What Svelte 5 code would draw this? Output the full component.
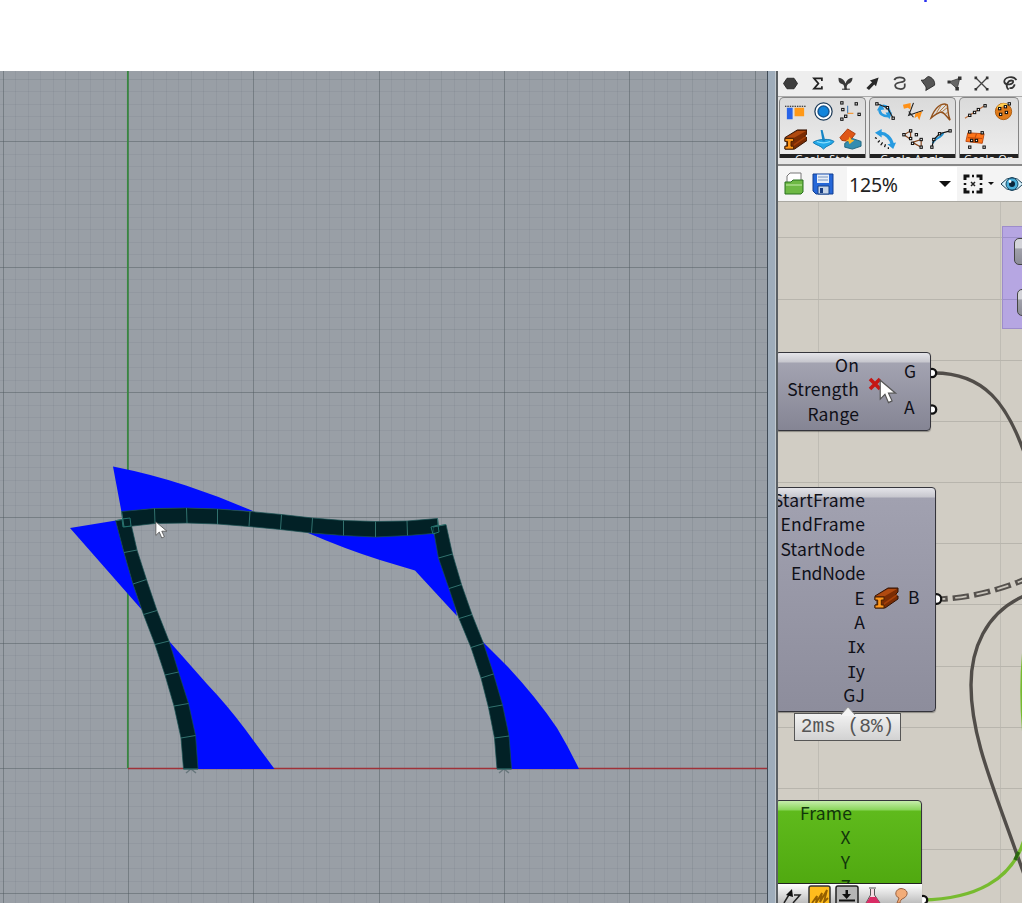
<script>
  // Viewport grid
  const step = 12.535;
  const vLines = Array.from({ length: 63 }, (_, i) => ({ p: 128 + (i - 10) * step, major: i % 10 === 0, mid: i % 5 === 0 })).filter((l) => l.p > 0 && l.p < 767);
  const hLines = Array.from({ length: 78 }, (_, i) => ({ p: 697.1 + (20 - i) * step, major: i % 10 === 0, mid: i % 5 === 0 })).filter((l) => l.p > 0 && l.p < 832);

  // Deformed members: pairs of opposite section points
  const members = [
    [[115.7, 520.7, 129.7, 518], [124, 552.5, 137, 550], [133, 584, 146.5, 579.5], [143.5, 614.5, 157, 610.5], [155, 644.5, 169, 641], [165, 675, 178.5, 672], [174, 706, 188.5, 703.5], [181, 738, 195.5, 735.5], [183.5, 769, 198, 769]],
    [[121.5, 511.5, 124, 527], [154.5, 508.5, 155, 523.5], [186.5, 508, 187, 523], [217.5, 509, 217.5, 524], [250, 511.5, 249, 526.5], [281.5, 514.5, 280.5, 529.5], [312.5, 518, 311.5, 533], [343.5, 520.5, 343.5, 535.5], [375.5, 521.5, 375.5, 537], [407, 521, 407.5, 535.5], [437.5, 518.5, 439, 533]],
    [[433, 527, 446, 524.5], [438.5, 558, 452.5, 554], [449, 588.5, 461.5, 584.5], [459, 618.5, 472, 614.5], [471, 647.5, 483.5, 643.5], [481, 678, 493.5, 674], [488.5, 707.5, 502.5, 705], [494.5, 738, 509, 736], [497, 769, 511.5, 769]],
  ].map((m) => ({
    outline: [...m.map((s) => [s[0], s[1]]), ...m.map((s) => [s[2], s[3]]).reverse()].join(' '),
    cuts: m,
  }));
  const moments = [
    'M113 466.5Q151 474 186 485.5T254 511.5L217 509L186 508L154 508.5L121.5 512Z',
    'M70 528L116 520.5L124 552L133 583L142 610Z',
    'M169 641L207 684Q227 705 245 729L274.5 769H196L193 735L174 672Z',
    'M307 532.5L343 535L375 536.5L407 535L434 533L441 558L452 588L457 616L415 570.5L380 560Q345 549 307 532.5Z',
    'M482 641L507 666Q536 697 557 728Q569 748 579 769H508L506 735L492 674Z',
  ];

  const boxes = (...pts) => pts.map(([x, y]) => `<rect x="${x - 1.2}" y="${y - 1.2}" width="2.4" height="2.4" fill="#fff" stroke="#111" stroke-width="1.1"/>`).join('');
  const line = (d, c, w = 1.2) => `<path d="${d}" fill="none" stroke="${c}" stroke-width="${w}"/>`;
  const fill = (d, c, s = 'none') => `<path d="${d}" fill="${c}" stroke="${s}"/>`;
  const svg = (body, w = 24, h = 24) => `<svg width="${w}" height="${h}" viewBox="0 0 ${w} ${h}">${body}</svg>`;

  const beam = fill('M1 10L14 2H24V6L22 8V10H24V13L11 22H1V19H3V14H1Z', '#7a2c04', '#331302') + fill('M2 10L14 3L23 3L11 10Z', '#b04a10') + fill('M10 17L23 8V10L10 19Z', '#a5400a') + fill('M1 11H10V14H7.3V19H10V22H1V19H3.7V14H1Z', '#ff981b', '#482004');

  const categories = [
    fill('M8 6H16L20 12L16 18H8L4 12Z', '#3d3d3d', '#222'),
    line('M17 9V6.2H8L13 12L8 17.8H17V15', '#222', 2),
    fill('M10.5 19C11 15 10 13 8 12.500C4 12 4 8 4 5.500C8 6 11 8 12 12C13 8 16 6 20 5.500C20 9 18 12 15 12.500C13 14 13 17 14 19Z', '#3a3a3a') + line('M8 18.5H17', '#333'),
    fill('M5 17L11.500 10.500L9 8.500L19 5L16 15L14 13L8 19.500Z', '#292929'),
    line('M6 8C8 4 17 4 18 8C18 12 8 9 7 14C7 19 18 20 18 15V12', '#444', 2),
    fill('M5 8C9 9 10 5 13 4C18 5 21 10 20 14L10 20C12 15 7 13 5 8Z', '#555', '#222'),
    fill('M6 10L18 6L15 18Z', '#666', '#444') + fill('M4 8.500H7.500V12H4ZM16 4H20V8H16ZM13 16H17V20H13Z', '#333'),
    line('M6 6L18 18M18 6L6 18', '#444', 1.5) + fill('M4 4H7V7H4ZM17 4H20V7H17ZM4 17H7V20H4ZM17 17H20V20H17Z', '#333'),
    line('M20 8C16 2 6 5 6 10C7 15 18 13 16 9C11 7 6 14 11 19M12 17C15 18 17 16 18 13', '#333', 2),
  ];

  const ribbon = [
    {
      title: 'Geolo Stat',
      icons: [
        fill('M3 8H9V20H3Z', '#2864e8') + fill('M11 8H21V17H11Z', '#ff9918') + '<path d="M1 6.500H23" stroke="#111" stroke-width="1.2" stroke-dasharray="1.500 1"/>',
        '<circle cx="12" cy="12" r="9" fill="#fff" stroke="#1d3b58" stroke-width="1.3"/><circle cx="12" cy="12" r="5.700" fill="#1285dc" stroke="#185893" stroke-width="1.500"/>',
        line('M9 6V14', '#4b82b9') + line('M9 14H15', '#f39b3d') + boxes([3, 3], [18, 4], [4, 10], [21, 15], [3, 20], [7, 17]),
        beam,
        fill('M1 15C7 11 19 11 23 14C21 18 15 18 12 22C9 18 4 18 1 15Z', '#24a9e9', '#1479b2') + fill('M9 2H11L14 14H11Z', '#1685c5') + line('M5 14Q12 17 19 14', '#8be0ff'),
        fill('M1 10L9 1L17 6L11 14L3 13Z', '#df5717', '#a93b0c') + fill('M6 16L14 11L23 14V19L14 22L6 20Z', '#348db0', '#236980') + fill('M11 9L13 12L16 13L13 15L11 17L10 14L7 13L10 12Z', '#ffb82d'),
      ],
    },
    {
      title: 'Geolo Anglo',
      icons: [
        line('M6 9C5 14 9 17 15 17M9 6C14 6 17 10 16 15', '#279be1', 2.6) + fill('M3 11L7 4L11 10ZM12 13H19L16 20Z', '#279be1') + line('M3 4L14 8L20 19', '#222') + boxes([3, 4], [14, 8], [20, 19]),
        line('M12 3L7 16L22 11M7 12L12 18', '#222') + fill('M1 5L9 3V10L6 8L2 9ZM14 14L21 12L18 21L16 17L13 19Z', '#ff9118'),
        line('M2 19C6 8 13 2 19 5C20 8 19 14 22 21C18 17 15 11 11 13C7 14 5 17 2 19Z', '#92501b', 1.5) + line('M8 13L13 5M11 12L18 5M14 12L19 8M17 15L20 12', '#b47535', 1),
        line('M5 6C12 4 18 11 19 17', '#279be1', 3.5) + fill('M1 5L8 1V10ZM14 17L23 15L20 22Z', '#279be1') + line('M1 10L3 11M4 15L6 13M7 18L9 15M11 20L12 17M15 22V20', '#111', 1.3),
        line('M2 7L9 3V12L2 7M11 15L20 12V20L11 15', '#87451b') + boxes([2, 7], [9, 3], [9, 11], [11, 16], [20, 12], [20, 20], [15, 7]),
        line('M4 16C5 10 12 12 15 5', '#2494d3', 2) + line('M3 20L5 12L11 6L22 3', '#111') + boxes([3, 20], [5, 12], [11, 6], [22, 3]),
      ],
    },
    {
      title: 'Geolo Op',
      icons: [
        line('M1 19L23 5', '#bd7141') + boxes([6, 16], [11, 13], [15, 10], [22, 6]),
        '<circle cx="12" cy="12" r="8.500" fill="#e07b1b" stroke="#ad5d10"/><path d="M6 9Q10 3 16 6" stroke="#ffcf52" stroke-width="3" fill="none"/>' + boxes([8, 9], [14, 7], [18, 4], [9, 15], [15, 13]),
        fill('M4 5L21 6L19 16L2 14Z', '#ff7519', '#bd4910') + line('M4 10L19 11M10 15L13 6', '#c64d0c') + boxes([6, 4], [19, 5], [8, 13], [13, 13], [6, 20], [21, 20]),
      ],
    },
  ];

  const openIcon = svg(fill('M5 9V4L8 1H19V11H5Z', '#fff', '#777') + fill('M3 10H9L11 8H21V20L19 22H3Z', '#6eb944', '#28711e') + line('M4 13H20', '#b8e59c'));
  const saveIcon = svg(fill('M2 2H22V22H5L2 19Z', '#2567d8', '#123f91') + fill('M6 2.500H18V11H6Z', '#e7eef8') + line('M7 5H17M7 8H17', '#7894bd', 1) + fill('M7 14H18V22H7Z', '#c6d4e6', '#17428a') + fill('M9 16H12V21H9Z', '#193e82'));
  const fitIcon = svg(line('M4 8V4H8.500M15.500 4H20V8M20 16V20H15.500M8.500 20H4V16', '#111', 3) + line('M10 10L14 14M14 10L10 14', '#222', 1.5) + line('M11 4H13M11 20H13M4 11V13M20 11V13', '#111', 2.5));
  const eyeIcon = svg(fill('M1 12Q12 -1 23 12Q12 25 1 12Z', '#d7f2fc', '#163a50') + '<circle cx="12" cy="12" r="6" fill="#4bafd9" stroke="#164b6a"/><circle cx="12" cy="12" r="3" fill="#09253b"/><circle cx="10" cy="9.500" r="1.400" fill="#fff"/>');
  const beamIcon = svg(beam, 26, 24);
  const pointer = fill('M1 1V17L5 13L8 20L11 18.5L8 12H14Z', '#fff', '#555');

  const wiresV = [40.5, 222.5];
  const wiresH = [35, 97, 158, 219, 280, 341, 402, 464, 525, 586, 647];
</script>

<main>
  <header><i></i></header>
  <div class="work">
    <svg class="viewport" width="767" height="832" viewBox="0 0 767 832">
      <rect width="767" height="832" fill="#999fa6" />
      {#each vLines as l}<rect x={Math.round(l.p)} y="0" width="1" height="832" fill="#4f5a61" opacity={l.major ? 0.48 : l.mid ? 0.14 : 0.09} />{/each}
      {#each hLines as l}<rect x="0" y={Math.round(l.p)} width="767" height="1" fill="#4f5a61" opacity={l.major ? 0.48 : l.mid ? 0.14 : 0.09} />{/each}
      <g transform="translate(0 -71)">
        <path d="M127.8 71V768" stroke="#37883f" stroke-width="1.7" />
        <path d="M128 768.5H767" stroke="#9f3138" stroke-width="1.4" />
        <path d="M186 773L191 769L196 773M499 773L504 769L509 773" fill="none" stroke="#68777c" stroke-width="1.5" />
        {#each moments as m}<path d={m} fill="#000cff" />{/each}
        {#each members as m}
          <polygon points={m.outline} fill="#022126" stroke="#174f50" stroke-width=".7" />
          {#each m.cuts as c}<path d={`M${c[0]} ${c[1]}L${c[2]} ${c[3]}`} stroke="#31716e" stroke-width="1" />{/each}
        {/each}
        <path d="M122 519L130 518L131 526L123 527ZM431 527L438 525L439 532L433 534Z" fill="none" stroke="#23736f" stroke-width="1" />
        <g transform="translate(155 521) scale(.85)">{@html pointer}</g>
      </g>
    </svg>
    <div class="splitter"></div>
    <section class="panel">
      <nav>{#each categories as c}<span>{@html svg(c)}</span>{/each}</nav>
      <div class="ribbon">
        {#each ribbon as g, i}
          <div class="group" class:narrow={i === 2}>
            <div class="icons">{#each g.icons as ic}{@html svg(ic)}{/each}</div>
            <div class="caption">{g.title}</div>
          </div>
        {/each}
      </div>
      <div class="toolbar">
        <span class="file">{@html openIcon}{@html saveIcon}</span>
        <span class="rule"></span>
        <div class="zoom"><span>125%</span><b></b></div>
        <div class="fit">{@html fitIcon}<b class="small"></b></div>
        {@html eyeIcon}
      </div>
      <div class="canvas">
        <svg class="layer" width="244" height="701" viewBox="0 0 244 701">
          {#each wiresV as x}<path d={`M${x} 0V701`} stroke="#bfbcb4" />{/each}
          {#each wiresH as y}<path d={`M0 ${y + 0.5}H244`} stroke="#b8b5ad" />{/each}
          <rect x="224.5" y="24.5" width="30" height="102" fill="#b6a6e2" stroke="#9d8ccb" />
          <path d="M224 35.5H244M224 97.5H244" stroke="#9e90cb" />
          <g transform="translate(-778 -202)" fill="none">
            <path d="M1024 596C985 613 971 650 971 685C971 740 995 790 1026 880" stroke="#514d49" stroke-width="3.4" />
            <path d="M934 373C985 373 1007 405 1024 452" stroke="#514d49" stroke-width="3.4" />
            <path d="M922 900C975 899 1012 880 1024 840M1024 650Q1020 690 1024 735" stroke="#77bb2f" stroke-width="3.4" />
            <path d="M1015 860L1018.500 852" stroke="#2b6611" stroke-width="3.400" />
            <path d="M942 599C965 598 995 592 1026 579" stroke="#55514d" stroke-width="5.6" stroke-linejoin="round" stroke-dasharray="16.500 5" stroke-dashoffset="10.500" />
            <path d="M942 599C965 598 995 592 1026 579" stroke="#c8c4bb" stroke-width="1.8" stroke-dasharray="11.500 10" stroke-dashoffset="8" />
            <g fill="#fff" stroke="#111" stroke-width="2.3"><circle cx="932" cy="373" r="4.2" /><circle cx="932" cy="409.5" r="4.2" /><circle cx="936.5" cy="599" r="4.8" /><circle cx="923" cy="900" r="4.2" /></g>
          </g>
        </svg>
        <div class="chip c1"></div>
        <div class="chip c2"></div>
        <div class="node field">
          <div class="inputs"><span>On</span><span>Strength</span><span>Range</span></div>
          <svg class="cross" width="14" height="14" viewBox="0 0 14 14"><path d="M2 2L12 12M12 2L2 12" stroke="#c51614" stroke-width="3.6" /></svg>
          <div class="outputs"><span>G</span><span>A</span></div>
        </div>
        <svg class="cursor" width="19" height="26" viewBox="0 0 16 22">{@html pointer}</svg>
        <div class="node beam">
          <div class="inputs">
            <span>StartFrame</span><span>EndFrame</span><span>StartNode</span><span class="tight">EndNode</span><span>E</span><span>A</span><span><em>I</em>x</span><span><em>I</em>y</span><span>GJ</span>
          </div>
          <div class="mark">{@html beamIcon}</div>
          <div class="outputs"><span>B</span></div>
        </div>
        <div class="timer">2ms (8%)<svg width="18" height="10" viewBox="0 0 18 10"><path d="M2 9L9 1L16 9V10H2Z" fill="#f4f4f4" /><path d="M2 9L9 1L16 9" fill="none" stroke="#999" /></svg></div>
        <div class="node green"><div class="inputs"><span>Frame</span><span>X</span><span>Y</span><span>Z</span></div></div>
        <div class="tools">
          <svg width="144" height="19" viewBox="0 0 144 19">
            <path d="M6 19L12 9M16 11H22L15 19" fill="none" stroke="#222" stroke-width="1.5" /><path d="M8 11L14 5L15 13Z" fill="#111" />
            <rect x="31" y="2" width="21" height="22" rx="2" fill="#ffbd1d" stroke="#333" stroke-width="1.5" />
            <path d="M34 19L39 12L38 19L44 9L42 18L49 6L46 18L50 14" fill="none" stroke="#946000" stroke-width="1.8" />
            <rect x="58" y="2" width="22" height="22" rx="2" fill="#b5b5b5" stroke="#222" stroke-width="1.5" />
            <path d="M61 16.500H77" stroke="#111" stroke-width="2" /><path d="M67.500 6H70V10H73L68.700 15L64 10H67.500Z" fill="#111" />
            <path d="M91 4H98M92.500 5V11L88 19H102L96.500 11V5" fill="#f6dbe2" stroke="#555" /><path d="M92 13H98L102 19H88Z" fill="#d92c65" />
            <path d="M119 19L121 14C116 12 117 5 123 4.500C130 5 131 11 126 14C123 15 122 17 122 19Z" fill="#f2ac78" stroke="#9a603d" />
          </svg>
        </div>
      </div>
    </section>
  </div>
</main>

<style>
  :global(body) { margin: 0; overflow: hidden; background: #fff; }
  main { width: 1022px; height: 903px; overflow: hidden; font-family: "Noto Sans CJK JP", sans-serif; }
  header { height: 71px; display: flex; }
  header i { width: 3px; height: 2px; margin-left: 924px; background: #2930ef; border-radius: 1px; }
  .work { display: flex; height: 832px; }
  .viewport { flex: none; display: block; }
  .splitter { flex: none; width: 12px; box-sizing: border-box; background: linear-gradient(90deg, #3f4a55 0 1.5px, #9fadbb 1.5px 8px, #c2cad0 8px 9px, #5b6064 9px 11px, #8f9294 11px); }
  .panel { flex: none; width: 244px; margin-left: -1px; overflow: hidden; display: flex; flex-direction: column; background: #ededed; }
  nav { height: 25px; flex: none; display: flex; background: #eee; }
  nav span { width: 27.35px; flex: none; display: flex; align-items: center; }
  nav :global(svg) { width: 21px; height: 21px; margin-left: 2px; }
  .ribbon { height: 70px; flex: none; display: flex; gap: 3px; padding-left: 1px; box-sizing: border-box; background: #e7e7e7; border-top: 1px solid #aaa; border-bottom: 2px solid #888; }
  .group { flex: none; width: 87px; height: 61px; overflow: hidden; box-sizing: border-box; border: 1px solid #858585; border-bottom: 0; border-radius: 5px 5px 0 0; background: linear-gradient(#dadada, #eee); }
  .narrow { width: 60px; }
  .icons { height: 56px; box-sizing: border-box; display: grid; grid-template-columns: repeat(3, 27.5px); grid-auto-rows: 28px; padding: 2px 0 0 4px; }
  .narrow .icons { grid-template-columns: repeat(2, 27.5px); }
  .icons :global(svg) { width: 23px; height: 23px; }
  .caption { height: 4px; overflow: hidden; background: #222; color: #fff; text-align: center; font: 11px/10px "Open Sans", sans-serif; letter-spacing: .2px; }
  .toolbar { height: 36px; flex: none; box-sizing: border-box; display: flex; align-items: center; background: #f4f4f4; border-bottom: 1px solid #aaa8a1; }
  .file { display: flex; gap: 5px; padding-left: 4px; }
  .toolbar :global(svg) { flex: none; width: 24px; height: 24px; }
  .rule { width: 1px; height: 26px; background: #ccc; margin: 0 5px 0 7px; }
  .zoom { flex: none; width: 110px; height: 34px; display: flex; align-items: center; justify-content: space-between; background: #fff; }
  .zoom span { font: 19.5px/30px "Noto Sans", sans-serif; color: #222; padding: 3px 0 0 2px; letter-spacing: -.2px; }
  b { border: 6px solid transparent; border-top-color: #111; border-bottom: 0; margin-right: 6px; }
  b.small { border-width: 3px 3px 0; margin: 0 0 0 3px; }
  .fit { flex: none; width: 43px; display: flex; align-items: center; padding-left: 4px; box-sizing: border-box; }
  .canvas { position: relative; flex: none; height: 701px; overflow: hidden; background: #d1cdc4; }
  .layer { position: absolute; inset: 0; }
  .chip { position: absolute; width: 30px; height: 25px; border: 1.5px solid #444; border-radius: 5px; background: linear-gradient(#d3d3d9 35%, #a0a0aa 40%, #8c8c98); }
  .c1 { left: 236px; top: 36px; }
  .c2 { left: 239px; top: 87px; }
  .node { position: absolute; left: -3px; box-sizing: border-box; border: 1px solid #34343b; border-radius: 4px; overflow: hidden; color: #101018; font-size: 17.5px; line-height: 24.4px; background: linear-gradient(#e4e4e9 0, #c7c7ce 9px, #a3a3b1 10px, #858594 100%); box-shadow: 0 1px 1px #0005; }
  .inputs { display: flex; flex-direction: column; align-items: flex-end; letter-spacing: .15px; }
  .inputs span { height: 24.4px; }
  .tight { letter-spacing: -.25px; }
  .outputs { display: flex; flex-direction: column; }
  .field { display: flex; top: 150px; width: 156px; height: 79px; }
  .field .inputs { width: 83px; }
  .cross { margin: 24px 0 0 9px; }
  .field .outputs { margin: 6px 0 0 22px; gap: 12px; }
  .cursor { position: absolute; left: 101px; top: 177px; }
  .beam { display: flex; top: 285px; width: 161px; height: 225px; background: linear-gradient(#e4e4e9 0, #c7c7ce 9px, #a1a1b0 10px, #8d8d9c 100%); }
  .beam .inputs { width: 89px; flex: none; }
  .mark { margin: 98px 0 0 9px; }
  .beam .outputs { padding-top: 97px; margin-left: 8px; }
  .outputs span:only-child { width: 14px; }
  em { font: 16.5px "DejaVu Sans Mono", monospace; margin-right: -1px; }
  .timer { position: absolute; left: 16px; top: 511px; width: 107px; height: 28px; box-sizing: border-box; border: 1.5px solid #565656; background: linear-gradient(#f2f2f2, #d2d2d2); text-align: center; color: #555; font: 19.5px/26px "Liberation Mono", monospace; white-space: nowrap; }
  .timer svg { position: absolute; left: 44px; top: -8px; }
  .green { top: 598px; width: 147px; height: 110px; color: #12370b; background: linear-gradient(#c6edab 0, #89d65a 9px, #5fba1c 10px, #4ba30c 100%); }
  .green .inputs { width: 76px; }
  .green span:not(:first-child) { width: 13px; text-align: center; }
  .tools { position: absolute; left: 0; top: 681px; width: 144px; height: 20px; border-top: 1px solid #222; background: linear-gradient(#fff, #bbb); }
</style>
